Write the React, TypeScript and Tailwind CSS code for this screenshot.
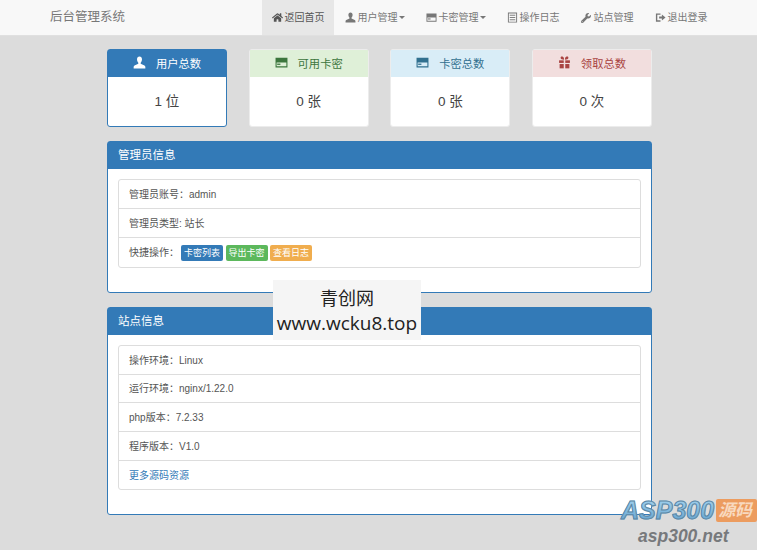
import type { ReactNode } from "react";
import { FaHome, FaWrench } from "react-icons/fa";

function UserIcon({ size }: { size: number }) {
  return (
    <svg width={size} height={size} viewBox="0 0 12 12" fill="currentColor">
      <path d="M6 0.5C4.5 0.5 3.7 1.6 3.7 3.1C3.7 4.4 4.2 5.5 4.9 6.2V7.2L1.4 8.7C0.8 9 0.6 9.5 0.6 10.1V11.5H11.4V10.1C11.4 9.5 11.2 9 10.6 8.7L7.1 7.2V6.2C7.8 5.5 8.3 4.4 8.3 3.1C8.3 1.6 7.5 0.5 6 0.5Z" />
    </svg>
  );
}

function CardIcon({ size }: { size: number }) {
  return (
    <svg width={size} height={size} viewBox="0 0 12 12" fill="currentColor">
      <path d="M0.5 1.5H11.5V10.5H0.5ZM1.5 6V9.5H10.5V6Z" fillRule="evenodd" />
      <rect x="2" y="7" width="3" height="1.2" />
    </svg>
  );
}

function ListIcon({ size }: { size: number }) {
  return (
    <svg width={size} height={size} viewBox="0 0 12 12" fill="currentColor">
      <path d="M1 0.5H11V11.5H1ZM2 1.5V10.5H10V1.5Z" fillRule="evenodd" />
      <rect x="3" y="3" width="6" height="1" />
      <rect x="3" y="5.5" width="6" height="1" />
      <rect x="3" y="8" width="6" height="1" />
    </svg>
  );
}

function GiftIcon({ size }: { size: number }) {
  return (
    <svg width={size} height={size} viewBox="0 0 12 12" fill="currentColor">
      <path d="M5.5 3.4C4 3.4 2.4 2.9 2.4 1.6C2.4 0.3 4.4 0 5.5 2ZM6.5 3.4C8 3.4 9.6 2.9 9.6 1.6C9.6 0.3 7.6 0 6.5 2Z" />
      <rect x="1" y="4" width="4.3" height="2.4" />
      <rect x="6.7" y="4" width="4.3" height="2.4" />
      <rect x="1.5" y="7.4" width="3.8" height="4" />
      <rect x="6.7" y="7.4" width="3.8" height="4" />
    </svg>
  );
}

function LogoutIcon({ size }: { size: number }) {
  return (
    <svg width={size} height={size} viewBox="0 0 12 12" fill="currentColor">
      <path d="M1 1.5H6V3H2.5V9H6V10.5H1Z" />
      <path d="M4.5 5H7.5V2.8L11.5 6L7.5 9.2V7H4.5Z" />
    </svg>
  );
}

const navItems = [
  { label: "用户管理", icon: <UserIcon size={11} />, caret: true },
  { label: "卡密管理", icon: <CardIcon size={11} />, caret: true },
  { label: "操作日志", icon: <ListIcon size={11} />, caret: false },
  { label: "站点管理", icon: <FaWrench size={10} />, caret: false },
  { label: "退出登录", icon: <LogoutIcon size={11} />, caret: false },
];

const stats = [
  {
    title: "用户总数",
    value: "1 位",
    icon: <UserIcon size={13} />,
    box: "border-[#337ab7]",
    head: "bg-[#337ab7] text-white",
  },
  {
    title: "可用卡密",
    value: "0 张",
    icon: <CardIcon size={13} />,
    box: "border-[#ececec]",
    head: "bg-[#dff0d8] text-[#3c763d]",
  },
  {
    title: "卡密总数",
    value: "0 张",
    icon: <CardIcon size={13} />,
    box: "border-[#ececec]",
    head: "bg-[#d9edf7] text-[#31708f]",
  },
  {
    title: "领取总数",
    value: "0 次",
    icon: <GiftIcon size={13} />,
    box: "border-[#ececec]",
    head: "bg-[#f2dede] text-[#a94442]",
  },
];

function Panel({ title, children }: { title: string; children: ReactNode }) {
  return (
    <section className="rounded-[3px] border border-[#337ab7] bg-white">
      <h3 className="flex h-[27px] items-center bg-[#337ab7] px-[10px] text-[11.5px] text-white">{title}</h3>
      <div className="px-[10px] pt-[10px] pb-[24px]">
        <ul className="rounded-[3px] border border-[#dddddd] text-[10px] text-[#555]">{children}</ul>
      </div>
    </section>
  );
}

function Row({ children, last, short }: { children: ReactNode; last?: boolean; short?: boolean }) {
  return (
    <li
      className={`flex items-center px-[10px] ${short ? "h-[28px]" : "h-[29px]"} ${
        last ? "" : "border-b border-[#dddddd]"
      }`}
    >
      {children}
    </li>
  );
}

function Label({ color, children }: { color: string; children: ReactNode }) {
  return <span className={`rounded-[2px] px-[3px] py-[2px] text-[9px] leading-[12px] text-white ${color}`}>{children}</span>;
}

export default function App() {
  return (
    <div
      className="relative h-[550px] overflow-hidden bg-[#dcdcdc]"
      style={{ fontFamily: '"Liberation Sans", "Noto Sans CJK SC", sans-serif' }}
    >
      <nav className="flex h-[36px] items-stretch border-b border-[#e0e0e0] bg-[#f8f8f8] pl-[50px] text-[10px] text-[#777]">
        <a className="flex w-[212px] items-center text-[12.5px]">后台管理系统</a>
        <a className="flex w-[72px] items-center justify-center gap-[2px] bg-[#e7e7e7] text-[#555]">
          <FaHome size={11} />
          返回首页
        </a>
        {navItems.map((item) => (
          <a key={item.label} className="flex items-center gap-[2px] px-[10.5px]">
            <span className="flex w-[11px] justify-center">{item.icon}</span>
            {item.label}
            {item.caret && <span className="ml-[-1px] h-0 w-0 border-x-[3px] border-t-[3px] border-x-transparent border-t-[#777]" />}
          </a>
        ))}
      </nav>

      <main className="ml-[107px] w-[545px] pt-[13px]">
        <div className="flex justify-between">
          {stats.map((s) => (
            <div key={s.title} className={`h-[78px] w-[120px] rounded-[3px] border bg-white ${s.box}`}>
              <div className={`flex h-[27px] items-center justify-center gap-[10px] pt-[1px] text-[11.3px] ${s.head}`}>
                <span className="mt-[-3px]">{s.icon}</span>
                {s.title}
              </div>
              <div className="flex h-[49px] items-center justify-center pt-[1px] text-[13.5px] text-[#444]">{s.value}</div>
            </div>
          ))}
        </div>

        <div className="mt-[14px]">
          <Panel title="管理员信息">
            <Row>管理员账号：admin</Row>
            <Row>管理员类型: 站长</Row>
            <Row last>
              <span className="mr-[2px]">快捷操作：</span>
              <span className="flex gap-[2.5px]">
                <Label color="bg-[#337ab7]">卡密列表</Label>
                <Label color="bg-[#5cb85c]">导出卡密</Label>
                <Label color="bg-[#f0ad4e]">查看日志</Label>
              </span>
            </Row>
          </Panel>
        </div>

        <div className="mt-[14px]">
          <Panel title="站点信息">
            <Row>操作环境：Linux</Row>
            <Row short>运行环境：nginx/1.22.0</Row>
            <Row>php版本：7.2.33</Row>
            <Row>程序版本：V1.0</Row>
            <Row last short>
              <a className="text-[#337ab7]">更多源码资源</a>
            </Row>
          </Panel>
        </div>
      </main>

      {/* watermark over the page */}
      <div
        className="absolute top-[280px] left-[273px] flex h-[60px] w-[148px] flex-col items-center justify-center bg-[#f5f5f5] pt-[2px] text-[18px] leading-[25px] text-[#222]"
        style={{ fontFamily: '"Open Sans", "Noto Sans CJK SC", sans-serif' }}
      >
        <span>青创网</span>
        <span className="text-[19px]">www.wcku8.top</span>
      </div>

      {/* asp300 logo */}
      <div className="absolute top-[496px] left-[621px] w-[136px]">
        <div className="flex items-center gap-[2px]">
          <span className="bg-gradient-to-b from-[#a9d8f2] to-[#5f9fcc] bg-clip-text text-[25px] leading-[28px] font-bold text-transparent italic [-webkit-text-stroke:1px_#5d87a5]">
            ASP300
          </span>
          <span className="flex-1 rounded-[2px] bg-[#ec9c5f] pl-[2px] text-[17px] leading-[23px] font-bold whitespace-nowrap text-[#f8d9bf] italic">
            源码
          </span>
        </div>
        <div className="mt-[1px] ml-[17px] text-[17.5px] leading-[22px] font-bold text-[#77797c] italic">asp300.net</div>
      </div>
    </div>
  );
}
